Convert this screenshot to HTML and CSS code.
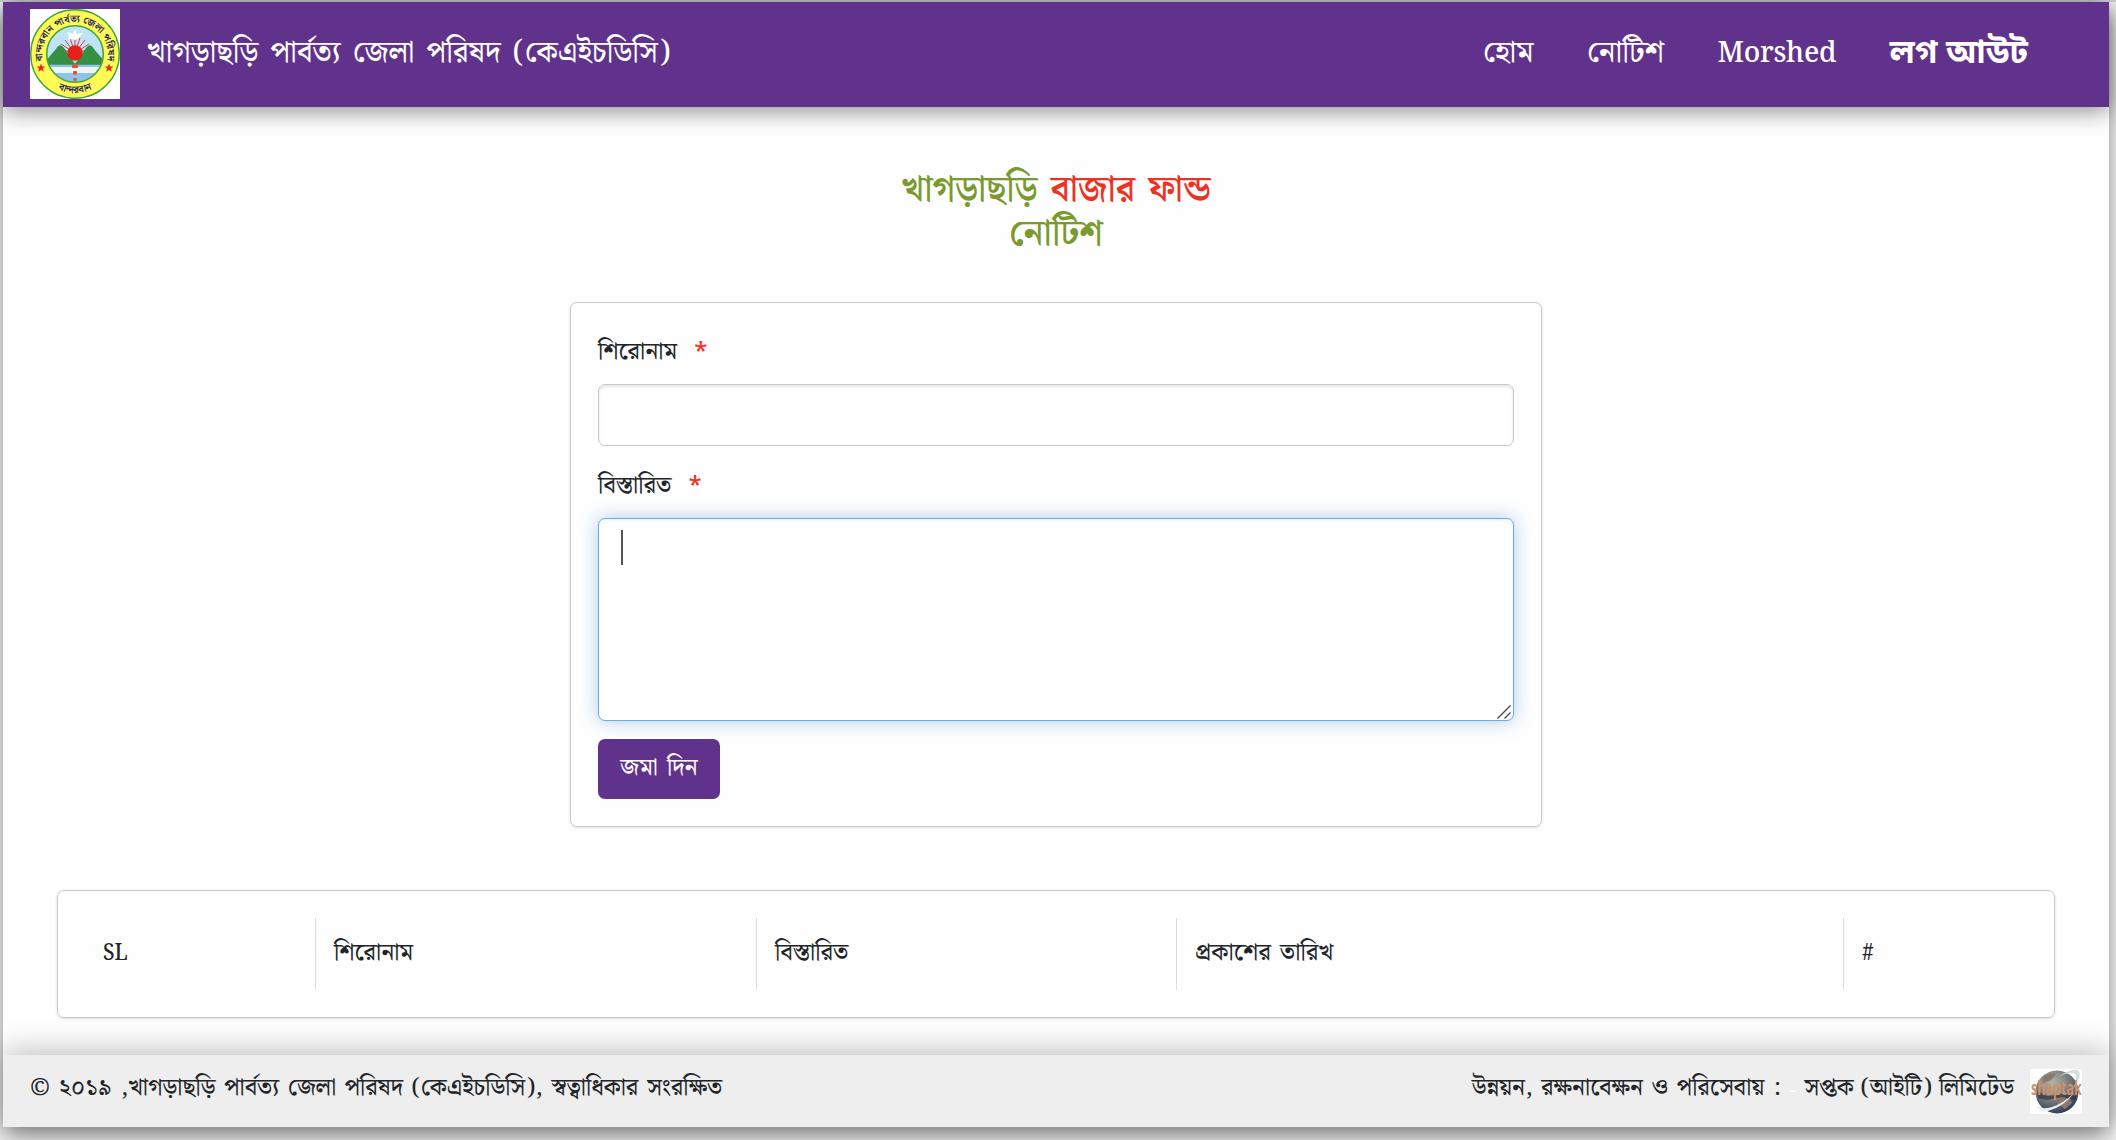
FILE: index.html
```html
<!DOCTYPE html>
<html lang="bn">
<head>
<meta charset="utf-8">
<title>নোটিশ</title>
<link rel="stylesheet" href="styles.css">
</head>
<body>
<div class="window">
  <header class="navbar">
    <svg class="logo" viewBox="0 0 90 90">
      <rect width="90" height="90" fill="#fff"/>
      <circle cx="45" cy="45" r="44.3" fill="#fdfd55" stroke="#46a23c" stroke-width="1.4"/>
      <clipPath id="disc"><circle cx="45" cy="45" r="28"/></clipPath>
      <g clip-path="url(#disc)">
        <rect width="90" height="90" fill="#bfe4f8"/>
        <rect y="55" width="90" height="35" fill="#8fc3ea"/>
        <rect y="58" width="90" height="6" fill="#fff" opacity=".85"/>
        <g stroke="#d8443c" stroke-width="1"><path d="M45 44V28M45 44 40 29M45 44 35 31M45 44 31 35M45 44 50 29M45 44 55 31M45 44 59 35M45 44 29 40M45 44 61 40"/></g>
        <path d="M13 55 26 40Q30 33 34 39L45 55ZM45 55 56 39Q60 33 64 40L77 55Z" fill="#369044"/>
        <circle cx="45" cy="44" r="7.7" fill="#e52219"/>
        <path d="M15 55H75" stroke="#369044" stroke-width="1.5"/>
      </g>
      <circle cx="45" cy="45" r="28.3" fill="none" stroke="#46a23c" stroke-width="1.6"/>
      <path d="M37 23l6 2 2-5 2 5 6-1-4 5-4 2-3-1-4 1 1-3z" fill="#fff"/>
      <g fill="#e4502a"><rect x="42" y="55.500" width="6" height="3.500" rx="1"/><rect x="43" y="62" width="4" height="3.500" rx="1"/><rect x="43.500" y="69" width="3" height="3" rx="1"/></g>
      <path id="star" d="M11 54.500l1.200 3.100h3.300l-2.600 2 .9 3.200-2.800-1.900-2.800 1.900.9-3.200-2.600-2H9.800z" fill="#e52a20"/>
      <use href="#star" x="68"/>
      <path id="arc-top" d="M13 53A32.800 32.800 0 1 1 77 53" fill="none"/>
      <path id="arc-bottom" d="M7 46A38 38 0 0 0 83 46" fill="none"/>
      <g class="seal-text"><text text-anchor="middle"><textPath href="#arc-top" startOffset="50%">বান্দরবান পার্বত্য জেলা পরিষদ</textPath></text>
      <text text-anchor="middle"><textPath href="#arc-bottom" startOffset="50%">বান্দরবান</textPath></text></g>
    </svg>
    <span class="brand">খাগড়াছড়ি পার্বত্য জেলা পরিষদ (কেএইচডিসি)</span>
    <nav class="menu">
      <a class="home">হোম</a><a class="notice">নোটিশ</a><a class="user">Morshed</a><a class="logout">লগ আউট</a>
    </nav>
  </header>
  <main class="content">
    <h1 class="title"><span>খাগড়াছড়ি <em>বাজার ফান্ড</em></span><span>নোটিশ</span></h1>
    <form class="card form">
      <label class="label" for="heading">শিরোনাম <i>*</i></label>
      <input class="control" id="heading">
      <label class="label second" for="details">বিস্তারিত <i>*</i></label>
      <div class="area-wrap">
        <textarea class="control area" id="details"></textarea>
        <span class="caret"></span>
        <svg class="grip" viewBox="0 0 14 14"><path d="M.5 13.500 13.500.5M7.500 13.500l6-6" stroke="#444" stroke-width="1.3"/></svg>
      </div>
      <button class="submit" type="button">জমা দিন</button>
    </form>
    <section class="card list">
      <div class="cell"><span class="latin">SL</span></div><div class="cell">শিরোনাম</div><div class="cell">বিস্তারিত</div><div class="cell">প্রকাশের তারিখ</div><div class="cell"><span class="latin">#</span></div>
    </section>
  </main>
  <footer class="footer">
    <span class="copyright">© ২০১৯ ,খাগড়াছড়ি পার্বত্য জেলা পরিষদ (কেএইচডিসি), স্বত্বাধিকার সংরক্ষিত</span>
    <span class="support">উন্নয়ন, রক্ষনাবেক্ষন ও পরিসেবায় :</span>
    <span class="dash">-</span>
    <span class="company">সপ্তক (আইটি) লিমিটেড</span>
    <svg class="globe" viewBox="0 0 52 45">
      <defs><radialGradient id="g" cx=".4" cy=".3" r=".75"><stop stop-color="#b5b4a8"/><stop offset=".5" stop-color="#7a7e7d"/><stop offset="1" stop-color="#303657"/></radialGradient></defs>
      <rect width="52" height="45" fill="#fff"/>
      <circle cx="27" cy="23" r="21.500" fill="url(#g)"/>
      <path d="M13 8q8-5 13-3l-5 6-8 3zM28 29l12 1 2 4-7 6-7-5z" fill="#8b7867"/>
      <path d="M7 22 18 27 33 25 46 27Q46 29 45 31L33 28 17 31 8 29Z" fill="#26252d" opacity=".6"/>
      <path d="M28 8Q43-2 49 2 52 8 43 20 48 9 45 5 39 2 28 8Z" fill="#d5dedf"/>
      <path d="M7 37Q8 44 18 42 35 37 44 24 34 34 22 38 12 41 7 37Z" fill="#e9f0f1"/>
      <text class="globe-text" transform="translate(1 26) scale(.74 1.1)">shaptak</text>
    </svg>
  </footer>
</div>
</body>
</html>
```
FILE: styles.css
```css
* { box-sizing: border-box; }
html, body { height: 100%; }
body {
  margin: 0;
  padding: 2px 7px 14px 3px;
  overflow: hidden;
  background: linear-gradient(#d9d8df 2px, #fafafa 2px);
  color: #212529;
  font: 500 24px "Noto Serif Bengali", "Noto Sans Bengali", "Noto Serif", "Liberation Serif", serif;
}
.window {
  display: flex;
  flex-direction: column;
  height: 1124px;
  background: #fefefe;
  box-shadow: 0 10px 24px rgba(0,0,0,.45);
}
.navbar {
  display: flex;
  align-items: center;
  flex: 0 0 105px;
  padding: 0 81px 4px 27px;
  background: #61328b;
  color: #fff;
  box-shadow: 0 4px 22px rgba(0,0,0,.45);
  white-space: nowrap;
}
.logo { width: 90px; height: 90px; margin: 3px 27px 0 0; }
.seal-text { font-size: 10px; font-weight: 700; fill: #29215f; }
.brand { font-size: 30.2px; word-spacing: 4.5px; }
.menu { display: flex; align-items: center; gap: 53.5px; margin-left: auto; font-size: 30.6px; }
.user { font-size: 28.2px; padding-top: 2px; letter-spacing: -.3px; }
.logout { padding-top: 3px; font-family: "Noto Sans Bengali", "Noto Sans", sans-serif; font-size: 33px; font-weight: 700; line-height: 1; }
.content { flex: 1; display: flex; flex-direction: column; align-items: center; padding: 62px 54px 37px; }
.title { display: flex; flex-direction: column; align-items: center; height: 133px; margin: 0; color: #7a9a2e; font-size: 36px; line-height: 44px; font-weight: 600; word-spacing: 4px; }
.title em { color: #ec3323; font-style: normal; }
.card { border: 1px solid #c9c9c9; border-radius: 7px; box-shadow: 0 1px 3px rgba(0,0,0,.12); }
.form { display: flex; flex-direction: column; align-items: flex-start; width: 972px; height: 525px; padding: 27px; }
.label { height: 54px; line-height: 44px; }
.label i { margin-left: 11px; color: #ec3323; font: 500 24px/1 "Noto Sans", sans-serif; }
.second { margin-top: 18px; }
.control { display: block; width: 100%; height: 62px; margin: 0; border: 1px solid #c8c8c8; border-radius: 7px; background: #fff; outline: 0; box-shadow: inset 0 2px 3px rgba(0,0,0,.1); resize: none; }
.area-wrap { position: relative; width: 100%; }
.area { height: 203px; border-color: #6daae8; box-shadow: 0 0 18px rgba(91,157,217,.5), inset 0 2px 3px rgba(0,0,0,.05); }
.caret { position: absolute; left: 23px; top: 12px; width: 2px; height: 35px; background: #555; }
.grip { position: absolute; right: 3px; bottom: 2px; width: 14px; height: 14px; }
.submit { width: 122px; height: 60px; margin-top: 18px; padding: 0 0 3px; border: 0; border-radius: 7px; background: #61328b; color: #fff; font: inherit; word-spacing: 3px; white-space: nowrap; }
.list { display: grid; grid-template-columns: 230px 441px 420px 667px 1fr; width: 1998px; height: 128px; margin-top: 63px; padding: 27px; }
.cell { padding: 0 18px; line-height: 70px; height: 72px; white-space: nowrap; border-left: 1px solid #ddd; word-spacing: 3px; }
.cell:first-child { border: 0; }
.latin { display: inline-block; transform: scaleX(.87); transform-origin: 0 50%; }
.footer { display: flex; align-items: center; flex: 0 0 72px; padding: 0 27px; background: #eee; box-shadow: 0 -4px 30px rgba(0,0,0,.25); white-space: nowrap; word-spacing: 2.6px; font-size: 23.7px; }
.copyright, .support, .company { padding-bottom: 7px; }
.support { margin-left: auto; }
.company { word-spacing: 1px; }
.dash { width: 24px; text-align: center; color: #fff; }
.globe { width: 52px; height: 45px; margin-left: 16px; }
.globe-text { font: bold 17px "Open Sans", sans-serif; word-spacing: 0; fill: #cf9168; }
```
